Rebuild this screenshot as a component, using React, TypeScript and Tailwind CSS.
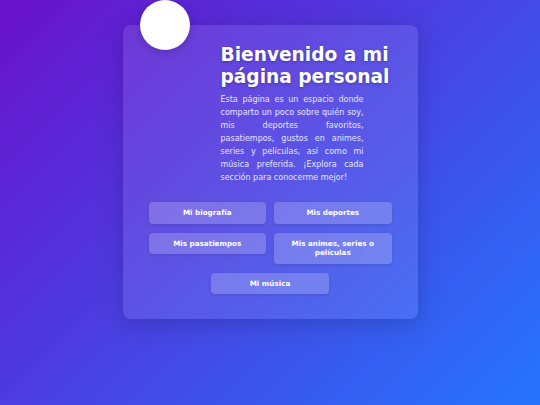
import React from 'react';

const LINKS: { label: string; wide?: boolean }[] = [
  { label: 'Mi biografía' },
  { label: 'Mis deportes' },
  { label: 'Mis pasatiempos' },
  { label: 'Mis animes, series o películas' },
];

export default function App() {
  return (
    <div className="min-h-screen w-full bg-[linear-gradient(135deg,#6a11cb,#2575fc)] flex justify-center pt-[25px] font-['DejaVu_Sans',sans-serif]">
      <div className="relative w-[295px] h-[294px] rounded-[8px] bg-white/10 shadow-[0_4px_24px_rgba(0,0,0,0.18)] px-[26px] pt-[19px] pb-[26px] flex flex-col">
        <div className="absolute left-[17px] top-[-25px] w-[50px] h-[50px] rounded-full bg-white shadow-[0_2px_8px_rgba(0,0,0,0.2)]" />

        <div className="pl-[72px]">
          <h1 className="text-[18.6px] leading-[22px] font-bold text-white [text-shadow:0_1px_3px_rgba(0,0,0,0.3)]">
            Bienvenido a mi página personal
          </h1>
          <p className="mt-[5px] w-[143px] text-[8px] leading-[13px] text-justify text-white/85">
            Esta página es un espacio donde comparto un poco sobre quién soy, mis deportes favoritos,
            pasatiempos, gustos en animes, series y películas, así como mi música preferida. ¡Explora
            cada sección para conocerme mejor!
          </p>
        </div>

        <div className="mt-[18px] grid grid-cols-2 gap-x-[8px] gap-y-[9px] items-start">
          {LINKS.map((l) => (
            <button
              key={l.label}
              className="rounded-[4px] bg-white/20 shadow-[0_1px_3px_rgba(0,0,0,0.12)] px-[10px] py-[6px] text-[7.2px] leading-[9.5px] font-bold text-white text-center"
            >
              {l.label}
            </button>
          ))}
        </div>
        <div className="mt-[9px] flex justify-center">
          <button className="w-[118px] rounded-[4px] bg-white/20 shadow-[0_1px_3px_rgba(0,0,0,0.12)] px-[10px] py-[6px] text-[7.2px] leading-[9.5px] font-bold text-white text-center">
            Mi música
          </button>
        </div>
      </div>
    </div>
  );
}
